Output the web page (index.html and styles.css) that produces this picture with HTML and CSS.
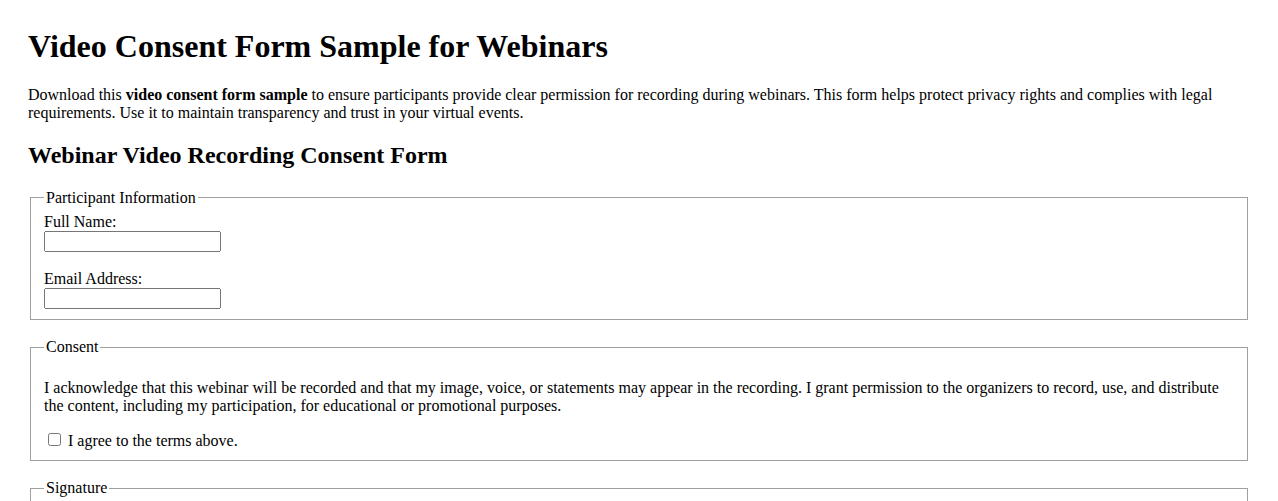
FILE: index.html
```html
<!DOCTYPE html>
<html lang="en">
<head>
<meta charset="utf-8">
<title>Video Consent Form Sample for Webinars</title>
<link rel="stylesheet" href="styles.css">
</head>
<body>
<h1 class="title">Video Consent Form Sample for Webinars</h1>
<p>Download this <strong>video consent form sample</strong> to ensure participants provide clear permission for recording during webinars. This form helps protect privacy rights and complies with legal requirements. Use it to maintain transparency and trust in your virtual events.</p>
<h2 class="subtitle">Webinar Video Recording Consent Form</h2>
<form>
<fieldset class="group">
<legend>Participant Information</legend>
<label for="name">Full Name:</label><br>
<input type="text" id="name" class="field"><br><br>
<label for="email">Email Address:</label><br>
<input type="email" id="email" class="field">
</fieldset>
<br>
<fieldset class="group">
<legend>Consent</legend>
<p class="note">I acknowledge that this webinar will be recorded and that my image, voice, or statements may appear in the recording. I grant permission to the organizers to record, use, and distribute the content, including my participation, for educational or promotional purposes.</p>
<label><input type="checkbox" class="check"> I agree to the terms above.</label>
</fieldset>
<br>
<fieldset class="group">
<legend>Signature</legend>
<label for="sig">Signature:</label><br>
<input type="text" id="sig" class="field"><br><br>
<label for="date">Date:</label><br>
<input type="date" id="date" class="field">
</fieldset>
</form>
</body>
</html>
```
FILE: styles.css
```css
body {
  margin: 28px;
  font-family: "Liberation Serif", "Times New Roman", serif;
  font-size: 16px;
  color: #000;
  background: #fff;
}
.title {
  margin-top: 0;
}
.subtitle {
  margin-bottom: 19.4px;
}
.group {
  border: 1px solid #a0a0a0;
  padding: 6.6px 12px 9.6px 13px;
  margin-bottom: 0.5px;
}
.note {
  margin-bottom: 15px;
}
.field {
  font-family: "Liberation Sans", Arial, sans-serif;
  font-size: 13.33px;
  box-sizing: border-box;
  width: 177px;
  height: 21px;
}
```
